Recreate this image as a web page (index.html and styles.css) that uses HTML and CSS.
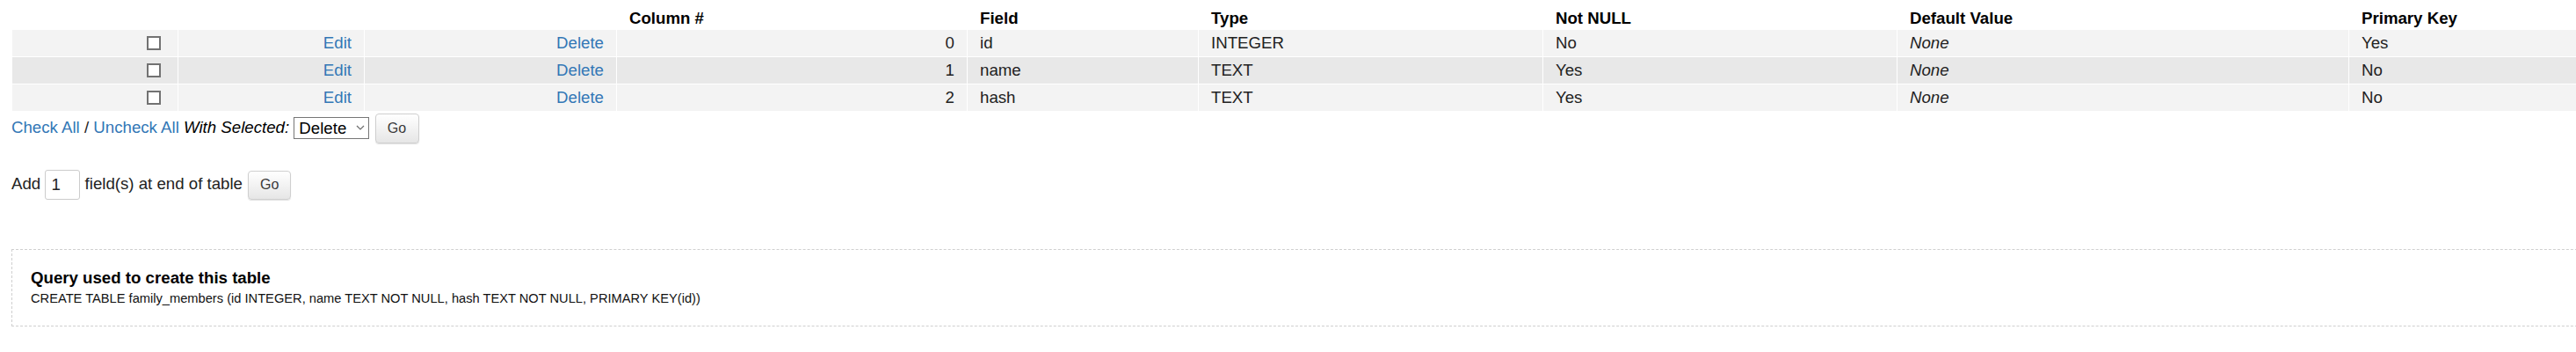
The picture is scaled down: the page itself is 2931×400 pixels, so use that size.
FILE: index.html
```html
<!DOCTYPE html>
<html lang="en">
<head>
<meta charset="utf-8">
<title>family_members structure</title>
<link rel="stylesheet" href="styles.css">
</head>
<body>
<div class="page">
  <table class="struct">
    <colgroup>
      <col class="c-chk"><col class="c-edit"><col class="c-del"><col class="c-num"><col class="c-field"><col class="c-type"><col class="c-nn"><col class="c-def"><col class="c-pk">
    </colgroup>
    <thead>
      <tr>
        <th></th><th></th><th></th>
        <th>Column #</th><th>Field</th><th>Type</th><th>Not NULL</th><th>Default Value</th><th>Primary Key</th>
      </tr>
    </thead>
    <tbody>
      <tr class="odd">
        <td class="r"><span class="chk"></span></td>
        <td class="r"><a href="#">Edit</a></td>
        <td class="r"><a href="#">Delete</a></td>
        <td class="r">0</td><td>id</td><td>INTEGER</td><td>No</td><td><i>None</i></td><td>Yes</td>
      </tr>
      <tr class="even">
        <td class="r"><span class="chk"></span></td>
        <td class="r"><a href="#">Edit</a></td>
        <td class="r"><a href="#">Delete</a></td>
        <td class="r">1</td><td>name</td><td>TEXT</td><td>Yes</td><td><i>None</i></td><td>No</td>
      </tr>
      <tr class="odd">
        <td class="r"><span class="chk"></span></td>
        <td class="r"><a href="#">Edit</a></td>
        <td class="r"><a href="#">Delete</a></td>
        <td class="r">2</td><td>hash</td><td>TEXT</td><td>Yes</td><td><i>None</i></td><td>No</td>
      </tr>
    </tbody>
  </table>

  <div class="actions">
    <a href="#">Check All</a> / <a href="#">Uncheck All</a> <i class="sel">With Selected:</i>
    <span class="select">Delete<svg class="chev" width="10" height="6" viewBox="0 0 10 6"><path d="M1 1l4 4 4-4" fill="none" stroke="#6d6d6d" stroke-width="1.2"/></svg></span>
    <span class="btn">Go</span>
  </div>

  <div class="addrow">
    Add <span class="num">1</span> field(s) at end of table <span class="btn">Go</span>
  </div>

  <div class="query">
    <div class="qtitle">Query used to create this table</div>
    <div class="qsql">CREATE TABLE family_members (id INTEGER, name TEXT NOT NULL, hash TEXT NOT NULL, PRIMARY KEY(id))</div>
  </div>
</div>
</body>
</html>
```

FILE: styles.css
```css
html, body {
  margin: 0;
  padding: 0;
  background: #fff;
}
body {
  font-family: "Liberation Sans", Arial, sans-serif;
  font-size: 18.67px;
  color: #222;
}
.page {
  padding: 8px 0 0 13px;
}
a {
  color: #3277b6;
  text-decoration: none;
}
.struct {
  border-collapse: separate;
  border-spacing: 1px;
  table-layout: fixed;
  width: 3061px;
}
.c-chk { width: 188px; }
.c-edit { width: 211px; }
.c-del { width: 286px; }
.c-num { width: 398px; }
.c-field { width: 262px; }
.c-type { width: 391px; }
.c-nn { width: 402px; }
.c-def { width: 513px; }
.c-pk { width: 400px; }
.struct th {
  text-align: left;
  font-weight: bold;
  color: #000;
  padding: 1px 14px;
  height: 24px;
  box-sizing: border-box;
  white-space: nowrap;
}
.struct td {
  padding: 0 14px;
  height: 30px;
  box-sizing: border-box;
  white-space: nowrap;
  vertical-align: middle;
}
.struct td.r { text-align: right; }
.odd td { background: #f3f3f3; }
.even td { background: #e8e8e8; }
.chk {
  display: inline-block;
  width: 16px;
  height: 16px;
  box-sizing: border-box;
  border: 2px solid #727272;
  background: #fff;
  vertical-align: middle;
  margin: 0 5px 2px 0;
}
.actions {
  margin-top: 1px;
  line-height: 33px;
  height: 34px;
}
.sel { color: #000; }
.select {
  display: inline-flex;
  align-items: center;
  justify-content: space-between;
  box-sizing: border-box;
  width: 86px;
  height: 25px;
  border: 1px solid #767676;
  padding: 0 4px 0 5px;
  color: #000;
  vertical-align: middle;
  margin-top: -2px;
  line-height: 23px;
}
.chev { flex: none; }
.btn {
  display: inline-flex;
  align-items: center;
  justify-content: center;
  box-sizing: border-box;
  width: 50px;
  height: 34px;
  border: 1px solid #cfcfcf;
  border-radius: 4px;
  background: linear-gradient(#ffffff, #e6e6e6);
  box-shadow: 0 1px 1px rgba(0, 0, 0, 0.12);
  font-size: 16px;
  color: #3a3a3a;
  vertical-align: middle;
  line-height: 1;
  margin-left: 1px;
}
.addrow {
  margin-top: 30px;
  line-height: 34px;
  height: 36px;
  color: #222;
}
.num {
  display: inline-flex;
  align-items: center;
  box-sizing: border-box;
  width: 40px;
  height: 34px;
  border: 1px solid #cccccc;
  border-radius: 3px;
  padding-left: 6px;
  vertical-align: middle;
  color: #222;
}
.addrow .btn { width: 49px; height: 33px; }
.query {
  margin-top: 55px;
  width: 3100px;
  box-sizing: border-box;
  border: 1px dashed #cfcfcf;
  padding: 21px 0 22px 21px;
}
.qtitle {
  font-weight: bold;
  color: #000;
  line-height: 21px;
  margin-bottom: 5px;
}
.qsql {
  font-size: 14.67px;
  line-height: 17px;
  color: #111;
}
```
